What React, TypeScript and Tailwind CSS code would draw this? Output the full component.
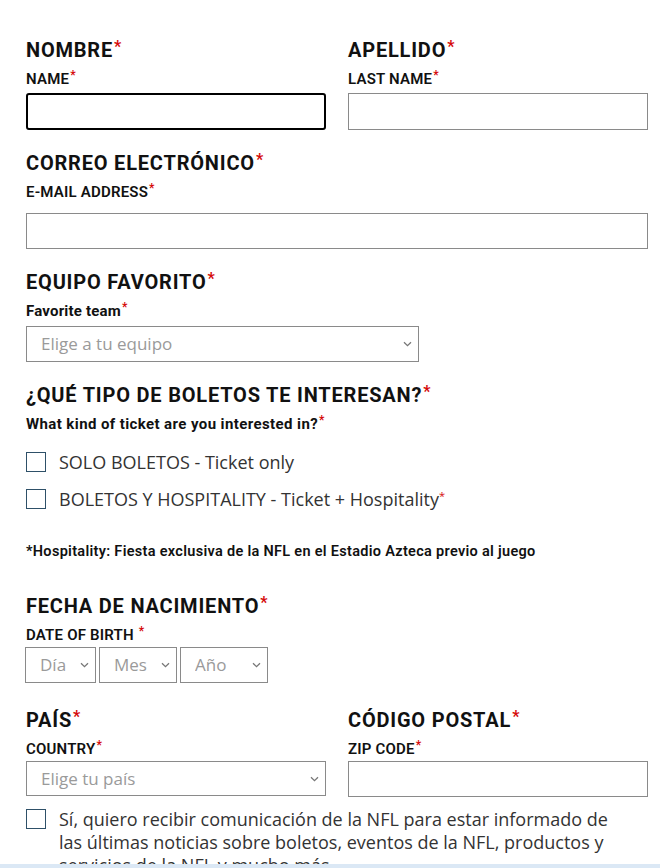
import React from "react";

const Req = () => <span className="text-[#d50a0a] text-[0.8em] leading-none relative top-[-5px] ml-[1px] font-bold">*</span>;

function Heading({ es, en }: { es: string; en: string }) {
    return (
        <div>
            <div className="text-[20px] leading-[24px] font-bold text-[#111] tracking-[0.8px]">
                {es}
                <Req />
            </div>
            <div className="mt-[8px] text-[15px] leading-[18px] font-semibold text-[#111] tracking-[0.2px]">
                {en}
                <Req />
            </div>
        </div>
    );
}

function Chevron() {
    return (
        <svg width="9" height="6" viewBox="0 0 9 6" className="absolute right-[7px] top-1/2 -translate-y-1/2 pointer-events-none">
            <path d="M1 1.2 L4.5 4.6 L8 1.2" fill="none" stroke="#777" strokeWidth="1.3" />
        </svg>
    );
}

function Select({ placeholder, className }: { placeholder: string; className: string }) {
    return (
        <div className={"relative " + className}>
            <select
                defaultValue=""
                className="appearance-none w-full h-full border border-[#8a8a8a] bg-white pl-[14px] pr-6 text-[17px] text-[#9a9a9a] outline-none"
                style={{ fontFamily: "'Open Sans', sans-serif" }}
            >
                <option value="" disabled>{placeholder}</option>
            </select>
            <Chevron />
        </div>
    );
}

function Check({ children }: { children: React.ReactNode }) {
    return (
        <label className="flex items-start gap-[13px] text-[18px] leading-[23px] text-[#333]" style={{ fontFamily: "'Open Sans', sans-serif" }}>
            <span className="mt-[1px] w-[20px] h-[20px] shrink-0 border border-[#2e5068] bg-white" />
            <span>{children}</span>
        </label>
    );
}

export default function App() {
    return (
        <div className="min-h-screen bg-white pl-[26px] pr-[12px] pt-[38px]" style={{ fontFamily: "Roboto, 'Liberation Sans', sans-serif" }}>
            <div className="grid grid-cols-2 gap-x-[22px]">
                <div>
                    <Heading es="NOMBRE" en="NAME" />
                    <input type="text" className="mt-[5px] w-full h-[37px] border-2 border-black rounded-[3px] outline-none" />
                </div>
                <div>
                    <Heading es="APELLIDO" en="LAST NAME" />
                    <input type="text" className="mt-[5px] w-full h-[37px] border border-[#8a8a8a] outline-none" />
                </div>
            </div>

            <div className="mt-[21px]">
                <Heading es="CORREO ELECTRÓNICO" en="E-MAIL ADDRESS" />
                <input type="text" className="mt-[12px] w-full h-[36px] border border-[#8a8a8a] outline-none" />
            </div>

            <div className="mt-[21px]">
                <div className="text-[20px] leading-[24px] font-bold text-[#111] tracking-[0.8px]">EQUIPO FAVORITO<Req /></div>
                <div className="mt-[8px] text-[15px] leading-[18px] font-bold text-[#111] tracking-[0.2px]">Favorite team<Req /></div>
                <Select placeholder="Elige a tu equipo" className="mt-[6px] w-[393px] h-[36px]" />
            </div>

            <div className="mt-[21px]">
                <div className="text-[20px] leading-[24px] font-bold text-[#111] tracking-[0.8px]">¿QUÉ TIPO DE BOLETOS TE INTERESAN?<Req /></div>
                <div className="mt-[8px] text-[15px] leading-[18px] font-bold text-[#111] tracking-[0.4px]">What kind of ticket are you interested in?<Req /></div>
                <div className="mt-[18px] flex flex-col gap-[14px]">
                    <Check>SOLO BOLETOS - Ticket only</Check>
                    <Check>
                        BOLETOS Y HOSPITALITY - Ticket + Hospitality
                        <span className="text-[#d50a0a] text-[11px] relative top-[-6px]">*</span>
                    </Check>
                </div>
            </div>

            <p className="mt-[30px] text-[14.5px] leading-[18px] font-semibold text-[#111] tracking-[0.3px]">
                *Hospitality: Fiesta exclusiva de la NFL en el Estadio Azteca previo al juego
            </p>

            <div className="mt-[33px]">
                <div className="text-[20px] leading-[24px] font-bold text-[#111] tracking-[0.8px]">FECHA DE NACIMIENTO<Req /></div>
                <div className="mt-[8px] text-[15px] leading-[18px] font-semibold text-[#111] tracking-[0.2px]">DATE OF BIRTH <Req /></div>
                <div className="mt-[3px] flex gap-[3px] -ml-[1px]">
                    <Select placeholder="Día" className="w-[71px] h-[36px]" />
                    <Select placeholder="Mes" className="w-[78px] h-[36px]" />
                    <Select placeholder="Año" className="w-[88px] h-[36px]" />
                </div>
            </div>

            <div className="mt-[25px] grid grid-cols-2 gap-x-[22px]">
                <div>
                    <Heading es="PAÍS" en="COUNTRY" />
                    <Select placeholder="Elige tu país" className="mt-[3px] w-full h-[35px]" />
                </div>
                <div>
                    <Heading es="CÓDIGO POSTAL" en="ZIP CODE" />
                    <input type="text" className="mt-[3px] w-full h-[36px] border border-[#8a8a8a] outline-none" />
                </div>
            </div>

            <div className="mt-[11px] pr-[20px]">
                <Check>
                    Sí, quiero recibir comunicación de la NFL para estar informado de las últimas noticias sobre boletos, eventos de la NFL, productos y servicios de la NFL y mucho más.
                </Check>
            </div>

            <div className="fixed bottom-0 left-0 right-0 h-[4px] bg-[#dbe8f5]" />
        </div>
    );
}
